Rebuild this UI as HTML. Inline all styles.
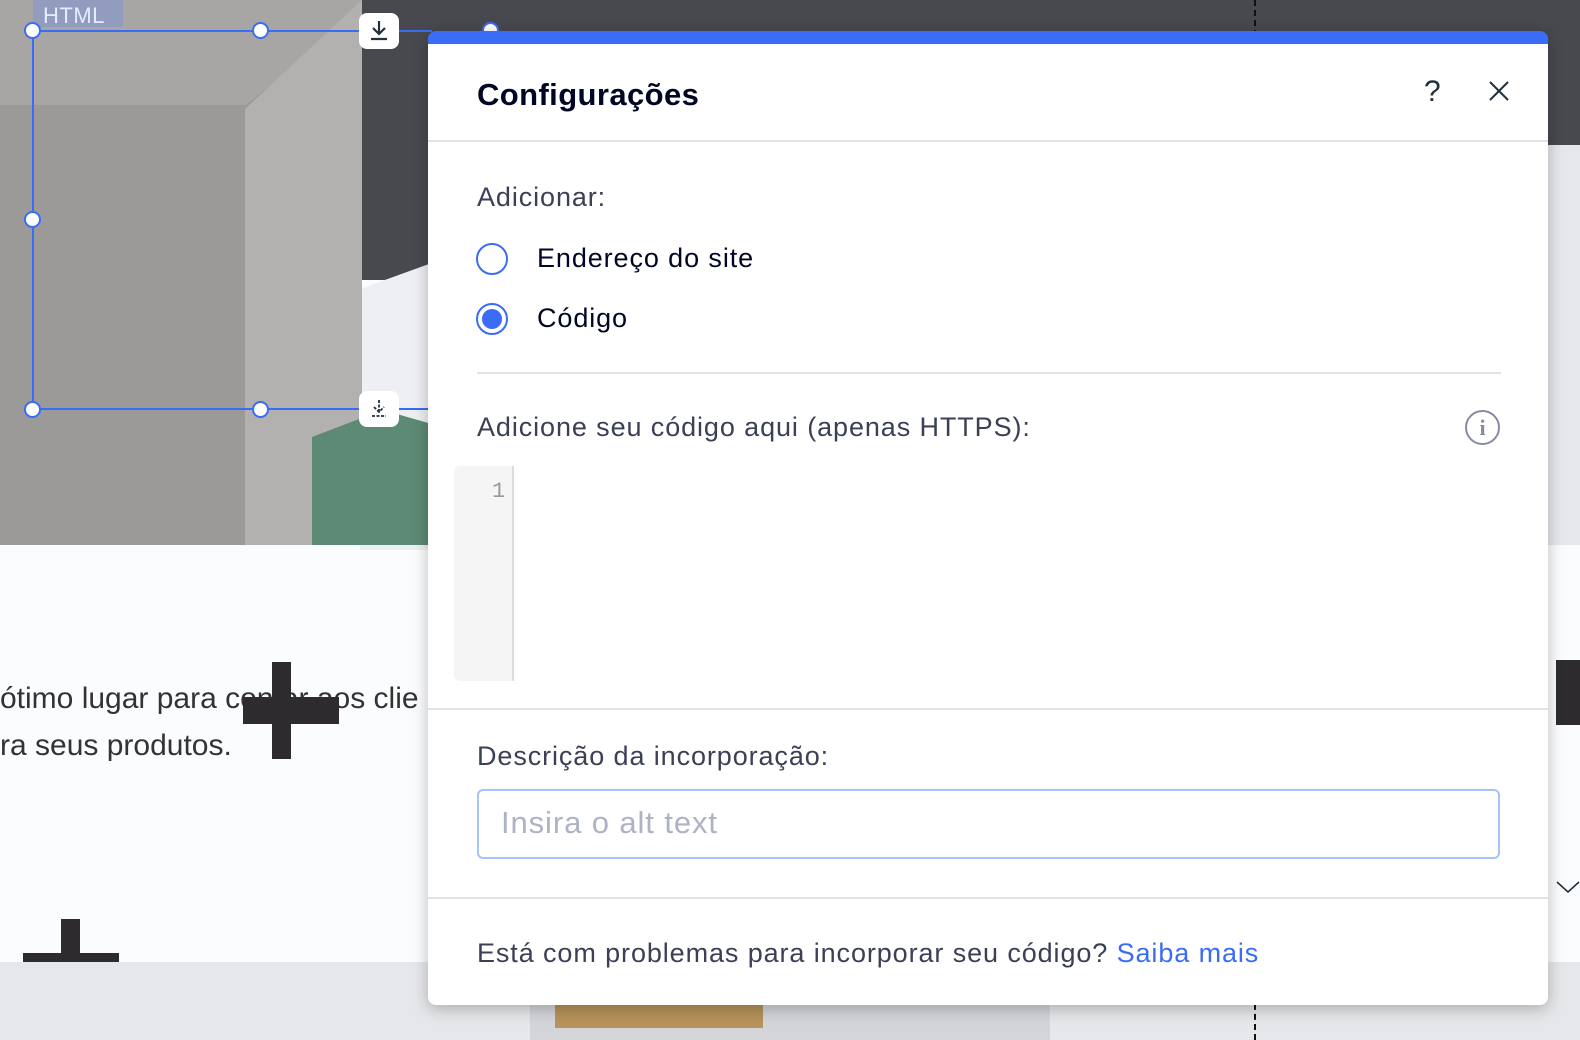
<!DOCTYPE html>
<html><head><meta charset="utf-8"><style>
*{margin:0;padding:0;box-sizing:border-box}
body{width:1580px;height:1040px;overflow:hidden;position:relative;background:#fbfcfe;font-family:"Liberation Sans",sans-serif;color:#20303c}
.abs{position:absolute}
.t{position:absolute;white-space:nowrap;letter-spacing:0.9px}
</style></head><body>
<div class="abs" style="left:360px;top:0;width:1220px;height:280px;background:#47494f"></div>
<div class="abs" style="left:360px;top:260px;width:80px;height:290px;background:#eeeff3;clip-path:polygon(0 10%,100% 0,100% 100%,0 100%)"></div>
<div class="abs" style="left:1548px;top:145px;width:32px;height:400px;background:#e6e7eb"></div>
<div class="abs" style="left:0;top:0;width:362px;height:545px;background:#9c9a98"></div>
<div class="abs" style="left:0;top:0;width:362px;height:105px;background:#a8a6a4;clip-path:polygon(0 0,100% 0,100% 10%,68% 100%,0 100%)"></div>
<div class="abs" style="left:245px;top:0;width:117px;height:545px;background:#b3b1af;clip-path:polygon(0 20%,100% 0,100% 100%,0 100%)"></div>
<div class="abs" style="left:312px;top:410px;width:118px;height:135px;background:#5d8a74;clip-path:polygon(0 20%,60% 0,100% 10%,100% 100%,0 100%)"></div>
<div class="abs" style="left:33px;top:0;width:90px;height:27px;background:rgba(130,150,210,.6)"></div>
<div class="t" style="left:43px;top:3px;font-size:22px;color:#e6ecff;letter-spacing:0.5px">HTML</div>
<div class="abs" style="left:32px;top:30px;width:400px;height:380px;border:2px solid #3b6cf5;border-right:none"></div>
<div class="abs" style="left:24px;top:22px;width:17px;height:17px;border-radius:50%;background:#fff;border:2px solid #3b6cf5"></div>
<div class="abs" style="left:252px;top:22px;width:17px;height:17px;border-radius:50%;background:#fff;border:2px solid #3b6cf5"></div>
<div class="abs" style="left:24px;top:211px;width:17px;height:17px;border-radius:50%;background:#fff;border:2px solid #3b6cf5"></div>
<div class="abs" style="left:24px;top:401px;width:17px;height:17px;border-radius:50%;background:#fff;border:2px solid #3b6cf5"></div>
<div class="abs" style="left:252px;top:401px;width:17px;height:17px;border-radius:50%;background:#fff;border:2px solid #3b6cf5"></div>
<div class="abs" style="left:482px;top:22px;width:17px;height:17px;border-radius:50%;background:#fff;border:2px solid #3b6cf5"></div>
<div class="abs" style="left:359px;top:13px;width:40px;height:36px;border-radius:8px;background:#fff"><svg width="40" height="36"><path d="M20 8v13M14 15l6 6 6-6M12 26h16" stroke="#20303c" stroke-width="2.2" fill="none"/></svg></div>
<div class="abs" style="left:359px;top:391px;width:40px;height:36px;border-radius:8px;background:#fff"><svg width="40" height="36"><path d="M20 9v12M15 16l5 5 5-5M13 25h14" stroke="#20303c" stroke-width="1.8" fill="none" stroke-dasharray="3 1.5"/></svg></div>
<div class="t" style="left:0;top:682px;font-size:30px;color:#333;letter-spacing:0">ótimo lugar para contar aos clie</div>
<div class="t" style="left:0;top:729px;font-size:30px;color:#333;letter-spacing:0">ra seus produtos.</div>
<div class="abs" style="left:272px;top:662px;width:19px;height:97px;background:#2d2b2e"></div>
<div class="abs" style="left:243px;top:697px;width:96px;height:27px;background:#2d2b2e"></div>
<div class="abs" style="left:61px;top:919px;width:19px;height:45px;background:#2d2b2e"></div>
<div class="abs" style="left:23px;top:953px;width:96px;height:10px;background:#2d2b2e"></div>
<div class="abs" style="left:0;top:962px;width:1580px;height:78px;background:#e6e7ea"></div>
<div class="abs" style="left:530px;top:962px;width:520px;height:78px;background:#d4d5d9"></div>
<div class="abs" style="left:555px;top:990px;width:208px;height:38px;background:#b6935a"></div>
<div class="abs" style="left:1254px;top:0;height:1040px;border-left:2px dashed #111"></div>
<div class="abs" style="left:1556px;top:660px;width:24px;height:65px;background:#2d2b2e"></div>
<div class="abs" style="left:428px;top:31px;width:1120px;height:974px;background:#fff;border-radius:8px;box-shadow:0 4px 16px rgba(0,0,0,.25);overflow:hidden;border-top:13px solid #3b6cf5">
<div class="t" style="left:49px;top:33px;font-size:31px;font-weight:bold;color:#000624;letter-spacing:0.4px">Configurações</div>
<div class="t" style="left:996px;top:31px;font-size:30px;color:#20303c">?</div>
<svg class="abs" style="left:1060px;top:36px" width="22" height="22"><path d="M2 2L20 20M20 2L2 20" stroke="#20303c" stroke-width="2"/></svg>
<div class="abs" style="left:0;top:96px;width:1120px;height:2px;background:#e0e3e7"></div>
<div class="t" style="left:49px;top:138px;font-size:27px;color:#3b4057">Adicionar:</div>
<div class="abs" style="left:48px;top:199px;width:32px;height:32px;border-radius:50%;border:2px solid #3b6cf5"></div>
<div class="t" style="left:109px;top:199px;font-size:27px;color:#000624">Endereço do site</div>
<div class="abs" style="left:48px;top:259px;width:32px;height:32px;border-radius:50%;border:2px solid #3b6cf5"><div style="margin:4px;width:20px;height:20px;border-radius:50%;background:#3b6cf5"></div></div>
<div class="t" style="left:109px;top:259px;font-size:27px;color:#000624">Código</div>
<div class="abs" style="left:49px;top:328px;width:1024px;height:2px;background:#e0e3e7"></div>
<div class="t" style="left:49px;top:368px;font-size:27px;color:#3b4057">Adicione seu código aqui (apenas HTTPS):</div>
<div class="abs" style="left:1037px;top:366px;width:35px;height:35px;border-radius:50%;border:2px solid #868aa5;text-align:center;font:bold 22px 'Liberation Serif',serif;color:#868aa5;line-height:31px">i</div>
<div class="abs" style="left:26px;top:422px;width:60px;height:215px;background:#f5f5f5;border-right:2px solid #ddd;border-radius:6px 0 0 6px"></div>
<div class="t" style="left:64px;top:435px;font:22px 'Liberation Mono',monospace;color:#999">1</div>
<div class="abs" style="left:0;top:664px;width:1120px;height:2px;background:#e0e3e7"></div>
<div class="t" style="left:49px;top:697px;font-size:27px;color:#3b4057">Descrição da incorporação:</div>
<div class="abs" style="left:49px;top:745px;width:1023px;height:70px;border:2px solid #a8c3f7;border-radius:6px"></div>
<div class="t" style="left:73px;top:761px;font-size:31px;color:#aeb2c6">Insira o alt text</div>
<div class="abs" style="left:0;top:853px;width:1120px;height:2px;background:#e0e3e7"></div>
<div class="t" style="left:49px;top:894px;font-size:27px;color:#3b4057">Está com problemas para incorporar seu código? <span style="color:#3b6cf5">Saiba mais</span></div>
</div>
<svg class="abs" style="left:1556px;top:880px" width="24" height="14"><path d="M1 2l11 10 11-10" stroke="#20303c" stroke-width="1.6" fill="none"/></svg>
</body></html>
